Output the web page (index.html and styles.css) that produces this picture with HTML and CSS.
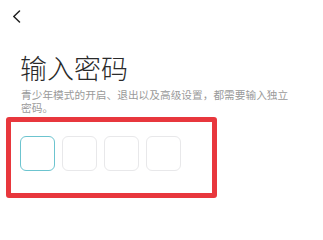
FILE: index.html
```html
<!DOCTYPE html>
<html lang="zh-CN">
<head>
<meta charset="utf-8">
<title>输入密码</title>
<link rel="stylesheet" href="styles.css">
</head>
<body>
<div class="page">
  <div class="nav">
    <svg class="back" width="9" height="13" viewBox="0 0 9 13"><path d="M7.5 1 L1.8 6.5 L7.5 12" fill="none" stroke="#222" stroke-width="1.5" stroke-linecap="round" stroke-linejoin="round"/></svg>
  </div>
  <h1 class="title">输入密码</h1>
  <p class="desc">青少年模式的开启、退出以及高级设置，都需要输入独立密码。</p>
  <div class="highlight">
    <div class="codes">
      <div class="code active"></div>
      <div class="code"></div>
      <div class="code"></div>
      <div class="code"></div>
    </div>
  </div>
</div>
</body>
</html>
```

FILE: styles.css
```css
html, body {
  margin: 0;
  padding: 0;
  background: #fff;
}
.page {
  width: 323px;
  height: 214px;
  font-family: "Noto Sans CJK SC", "Noto Sans", sans-serif;
  overflow: hidden;
}
.nav {
  height: 33px;
  display: flex;
  align-items: flex-start;
  padding: 10px 0 0 12px;
  box-sizing: border-box;
}
.back {
  display: block;
}
.title {
  margin: 18px 0 0 20px;
  font-size: 27px;
  line-height: 34px;
  font-weight: 300;
  color: #2a2a2a;
}
.desc {
  margin: 2.5px 30px 0 21px;
  font-size: 10.7px;
  line-height: 13.5px;
  color: #9a9a9a;
}
.highlight {
  margin: 2.5px 0 0 6px;
  width: 211px;
  height: 81px;
  box-sizing: border-box;
  border: 5px solid #e8373d;
  border-radius: 3px;
  padding: 14px 0 0 9px;
}
.codes {
  display: flex;
  gap: 7px;
}
.code {
  width: 35px;
  height: 35px;
  box-sizing: border-box;
  border: 1px solid #e8e8ea;
  border-radius: 6px;
}
.code.active {
  border-color: #6cc4cf;
}
```
